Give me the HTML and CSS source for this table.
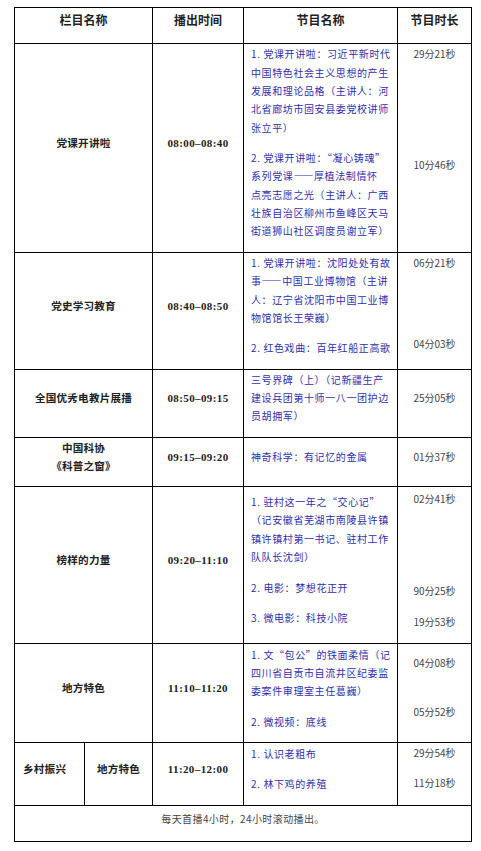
FILE: index.html
```html
<!DOCTYPE html>
<html lang="zh-CN">
<head>
<meta charset="utf-8">
<title>节目单</title>
<link rel="stylesheet" href="styles.css">
</head>
<body>
<table class="schedule">
  <colgroup>
    <col class="c1a">
    <col class="c1b">
    <col class="c2">
    <col class="c3">
    <col class="c4">
  </colgroup>
  <tr class="h-head">
    <th colspan="2">栏目名称</th>
    <th>播出时间</th>
    <th>节目名称</th>
    <th>节目时长</th>
  </tr>
  <tr class="h-r1">
    <td colspan="2" class="col">党课开讲啦</td>
    <td class="time">08:00–08:40</td>
    <td class="prog">
      <p>1. 党课开讲啦：习近平新时代<br>中国特色社会主义思想的产生<br>发展和理论品格（主讲人：河<br>北省廊坊市固安县委党校讲师<br>张立平）</p>
      <p>2. 党课开讲啦：“凝心铸魂”<br>系列党课——厚植法制情怀<br>点亮志愿之光（主讲人：广西<br>壮族自治区柳州市鱼峰区天马<br>街道狮山社区调度员谢立军）</p>
    </td>
    <td class="dur top">
      <p>29分21秒</p>
      <p class="g-r1">10分46秒</p>
    </td>
  </tr>
  <tr class="h-r2">
    <td colspan="2" class="col">党史学习教育</td>
    <td class="time">08:40–08:50</td>
    <td class="prog">
      <p>1. 党课开讲啦：沈阳处处有故<br>事——中国工业博物馆（主讲<br>人：辽宁省沈阳市中国工业博<br>物馆馆长王荣巍）</p>
      <p>2. 红色戏曲：百年红船正高歌</p>
    </td>
    <td class="dur top">
      <p>06分21秒</p>
      <p class="g-r2">04分03秒</p>
    </td>
  </tr>
  <tr class="h-r3">
    <td colspan="2" class="col">全国优秀电教片展播</td>
    <td class="time">08:50–09:15</td>
    <td class="prog">
      <p>三号界碑（上）（记新疆生产<br>建设兵团第十师一八一团护边<br>员胡拥军）</p>
    </td>
    <td class="dur"><p>25分05秒</p></td>
  </tr>
  <tr class="h-r4">
    <td colspan="2" class="col">中国科协<br>《科普之窗》</td>
    <td class="time">09:15–09:20</td>
    <td class="prog"><p>神奇科学：有记忆的金属</p></td>
    <td class="dur"><p>01分37秒</p></td>
  </tr>
  <tr class="h-r5">
    <td colspan="2" class="col">榜样的力量</td>
    <td class="time">09:20–11:10</td>
    <td class="prog">
      <p>1. 驻村这一年之“交心记”<br>（记安徽省芜湖市南陵县许镇<br>镇许镇村第一书记、驻村工作<br>队队长沈剑）</p>
      <p>2. 电影：梦想花正开</p>
      <p>3. 微电影：科技小院</p>
    </td>
    <td class="dur top">
      <p class="g-r5a">02分41秒</p>
      <p class="g-r5b">90分25秒</p>
      <p class="g-r5c">19分53秒</p>
    </td>
  </tr>
  <tr class="h-r6">
    <td colspan="2" class="col">地方特色</td>
    <td class="time">11:10–11:20</td>
    <td class="prog">
      <p>1. 文“包公”的铁面柔情（记<br>四川省自贡市自流井区纪委监<br>委案件审理室主任葛巍）</p>
      <p>2. 微视频：底线</p>
    </td>
    <td class="dur top">
      <p class="g-r6a">04分08秒</p>
      <p class="g-r6b">05分52秒</p>
    </td>
  </tr>
  <tr class="h-r7">
    <td class="col left">乡村振兴</td>
    <td class="col">地方特色</td>
    <td class="time">11:20–12:00</td>
    <td class="prog">
      <p>1. 认识老粗布</p>
      <p>2. 林下鸡的养殖</p>
    </td>
    <td class="dur top">
      <p>29分54秒</p>
      <p class="g-r7">11分18秒</p>
    </td>
  </tr>
  <tr class="h-foot">
    <td colspan="5" class="note">每天首播4小时，24小时滚动播出。</td>
  </tr>
</table>
</body>
</html>
```

FILE: styles.css
```css
body {
  margin: 0;
  background: #fff;
  font-family: "Noto Sans CJK SC", "Noto Sans", sans-serif;
}

.schedule {
  border-collapse: collapse;
  table-layout: fixed;
  width: 457px;
  margin: 7px 0 0 14px;
}

.c1a { width: 70px; }
.c1b { width: 68px; }
.c2 { width: 91px; }
.c3 { width: 154px; }
.c4 { width: 74px; }

.schedule th,
.schedule td {
  border: 1px solid #000;
  padding: 1px 7px 11px;
  vertical-align: middle;
  line-height: 18.3px;
  font-size: 10px;
  letter-spacing: 0.6px;
  color: #333;
}

.schedule th {
  font-size: 12px;
  font-weight: 700;
  color: #222;
  letter-spacing: 0;
  text-align: center;
}

.schedule p {
  margin: 0;
  white-space: nowrap;
}

.h-head { height: 36px; }
.h-r1 { height: 209px; }
.h-r2 { height: 116px; }
.h-r3 { height: 68px; }
.h-r4 { height: 47px; }
.h-r5 { height: 157px; }
.h-r6 { height: 99px; }
.h-r7 { height: 63px; }
.h-foot { height: 36px; }

.schedule .col {
  text-align: center;
  font-weight: 700;
  color: #222;
  font-size: 10.6px;
  letter-spacing: 0.2px;
}

.schedule .col.left {
  text-align: left;
  padding-left: 8px;
}

.schedule .time {
  text-align: center;
  font-family: "Liberation Serif", "Times New Roman", serif;
  font-weight: 700;
  font-size: 11px;
  letter-spacing: 0.4px;
  color: #222;
}

.schedule .prog {
  color: #2f2fb0;
}

.schedule .prog p + p {
  margin-top: 12.2px;
}

.schedule .dur {
  text-align: center;
  color: #444;
  letter-spacing: 0;
}

.schedule .dur.top {
  vertical-align: top;
}

.dur .g-r1 { margin-top: 92.7px; }
.dur .g-r2 { margin-top: 62.7px; }
.dur .g-r5a { margin-top: 1.5px; }
.dur .g-r5b { margin-top: 74.3px; }
.dur .g-r5c { margin-top: 12.7px; }
.dur .g-r6a { margin-top: 9px; }
.dur .g-r6b { margin-top: 30.7px; }
.dur .g-r7 { margin-top: 11.7px; }

.schedule .note {
  text-align: center;
  color: #444;
  letter-spacing: 0.4px;
}
```
